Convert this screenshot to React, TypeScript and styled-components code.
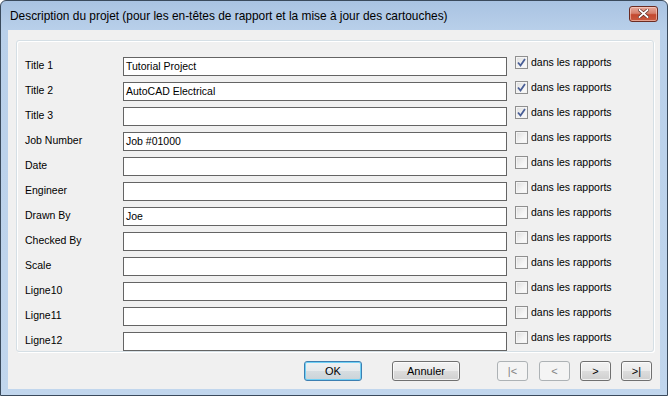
import React from "react";
import styled, { createGlobalStyle, css } from "styled-components";

const Global = createGlobalStyle`
  html, body {
    margin: 0;
    padding: 0;
    background: #fff;
  }
  body {
    font-family: "Liberation Sans", Arial, sans-serif;
    font-size: 10.5px;
    color: #000;
  }
`;

const Window = styled.div`
  width: 668px;
  height: 396px;
  box-sizing: border-box;
  border: 1px solid #3a4a5c;
  border-radius: 6px 6px 0 0;
  background: linear-gradient(180deg, #a9c3e2 0px, #b9d0ea 30px, #c1d6ed 100%);
  display: flex;
  flex-direction: column;
  overflow: hidden;
`;

const TitleBar = styled.div`
  height: 29px;
  display: flex;
  align-items: center;
  justify-content: space-between;
  padding: 0 9px 0 9px;
`;

const Caption = styled.div`
  font-family: "Liberation Sans", Arial, sans-serif;
  font-size: 11.9px;
  color: #000;
  margin-top: 1px;
`;

const CloseButton = styled.div`
  width: 29px;
  height: 16px;
  margin-top: -4px;
  box-sizing: border-box;
  border: 1px solid #6b2b22;
  border-radius: 3px;
  background: linear-gradient(180deg, #e8a99c 0%, #d6806c 45%, #c4492f 55%, #c85a40 100%);
  box-shadow: inset 0 0 0 1px rgba(255, 220, 210, 0.55);
  display: flex;
  align-items: center;
  justify-content: center;
`;

const Client = styled.div`
  flex: 1;
  margin: 0 7px 6px 7px;
  background: #f0f0f0;
  display: flex;
  flex-direction: column;
  padding: 10px 6px 0 8px;
`;

const Group = styled.div`
  height: 312px;
  box-sizing: border-box;
  border: 1px solid #d5dfe5;
  border-radius: 3px;
  box-shadow: inset 1px 1px 0 #fff, 1px 1px 0 #fff;
  padding: 16px 0 0 8px;
  display: flex;
  flex-direction: column;
  gap: 6px;
`;

const Row = styled.div`
  display: flex;
  align-items: center;
  height: 19px;
`;

const Label = styled.div`
  width: 98px;
  margin-top: -4px;
`;

const Field = styled.div`
  width: 384px;
  height: 19px;
  box-sizing: border-box;
  border: 1px solid #646464;
  background: #fff;
  line-height: 17px;
  padding-left: 2px;
  white-space: nowrap;
`;

const Check = styled.div`
  display: flex;
  align-items: center;
  margin-left: 8px;
  margin-top: -9px;
  gap: 3px;
`;

const Box = styled.div`
  width: 13px;
  height: 13px;
  box-sizing: border-box;
  border: 1px solid #8f8f8f;
  background: linear-gradient(135deg, #dcdcdc 0%, #f4f4f4 60%, #fbfbfb 100%);
  box-shadow: inset 0 0 0 1px #f4f4f4;
  display: flex;
  align-items: center;
  justify-content: center;
`;

const Footer = styled.div`
  display: flex;
  align-items: center;
  padding: 9px 0 0 288px;
`;

const Button = styled.div<{ $w: number; $default?: boolean; $disabled?: boolean; $gap?: number }>`
  width: ${(p) => p.$w}px;
  height: 20px;
  box-sizing: border-box;
  margin-left: ${(p) => p.$gap ?? 0}px;
  border: 1px solid #707070;
  border-radius: 3px;
  background: linear-gradient(180deg, #f2f2f2 0%, #ebebeb 49%, #dddddd 50%, #cfcfcf 100%);
  box-shadow: inset 0 0 0 1px rgba(255, 255, 255, 0.7);
  display: flex;
  align-items: center;
  justify-content: center;
  font-size: 11px;
  color: #000;
  ${(p) =>
    p.$default &&
    css`
      border-color: #3c7fb1;
      box-shadow: inset 0 0 0 1px #6fd0f5;
      background: linear-gradient(180deg, #eef1f3 0%, #e6eaec 49%, #d6dde1 50%, #cbd3d8 100%);
    `}
  ${(p) =>
    p.$disabled &&
    css`
      border-color: #adb2b5;
      background: #f4f4f4;
      box-shadow: none;
      color: #838383;
    `}
`;

const rows: { label: string; value: string; checked: boolean }[] = [
  { label: "Title 1", value: "Tutorial Project", checked: true },
  { label: "Title 2", value: "AutoCAD Electrical", checked: true },
  { label: "Title 3", value: "", checked: true },
  { label: "Job Number", value: "Job #01000", checked: false },
  { label: "Date", value: "", checked: false },
  { label: "Engineer", value: "", checked: false },
  { label: "Drawn By", value: "Joe", checked: false },
  { label: "Checked By", value: "", checked: false },
  { label: "Scale", value: "", checked: false },
  { label: "Ligne10", value: "", checked: false },
  { label: "Ligne11", value: "", checked: false },
  { label: "Ligne12", value: "", checked: false },
];

const Tick = () => (
  <svg width="9" height="9" viewBox="0 0 9 9">
    <path d="M1 4.5 L3.5 7.5 L8 1" fill="none" stroke="#4a5f97" strokeWidth="1.8" />
  </svg>
);

const CloseX = () => (
  <svg width="11" height="9" viewBox="0 0 11 9">
    <path d="M1.5 1 L9.5 8 M9.5 1 L1.5 8" stroke="#5a2a24" strokeWidth="3.2" strokeLinecap="square" />
    <path d="M1.5 1 L9.5 8 M9.5 1 L1.5 8" stroke="#fff" strokeWidth="1.8" strokeLinecap="square" />
  </svg>
);

export default function App() {
  return (
    <>
      <Global />
      <Window>
        <TitleBar>
          <Caption>Description du projet (pour les en-têtes de rapport et la mise à jour des cartouches)</Caption>
          <CloseButton>
            <CloseX />
          </CloseButton>
        </TitleBar>
        <Client>
          <Group>
            {rows.map((r) => (
              <Row key={r.label}>
                <Label>{r.label}</Label>
                <Field>{r.value}</Field>
                <Check>
                  <Box>{r.checked && <Tick />}</Box>
                  <span>dans les rapports</span>
                </Check>
              </Row>
            ))}
          </Group>
          <Footer>
            <Button $w={58} $default>OK</Button>
            <Button $w={68} $gap={30}>Annuler</Button>
            <Button $w={31} $gap={37} $disabled>|&lt;</Button>
            <Button $w={31} $gap={11} $disabled>&lt;</Button>
            <Button $w={31} $gap={10}>&gt;</Button>
            <Button $w={31} $gap={10}>&gt;|</Button>
          </Footer>
        </Client>
      </Window>
    </>
  );
}
